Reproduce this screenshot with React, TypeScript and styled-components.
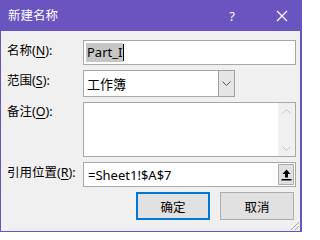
import styled, { createGlobalStyle } from 'styled-components';

const Purple = '#6954c0';
const FieldBorder = '#a8a8a8';
const FontStack = '"Noto Sans", "Noto Sans CJK SC", sans-serif';

const GlobalStyle = createGlobalStyle`
	html, body {
		margin: 0;
		padding: 0;
		background: #ffffff;
	}
	* {
		box-sizing: border-box;
	}
`;

function CloseIcon() {
	return (
		<svg width='12' height='12' viewBox='0 0 12 12'>
			<path d='M1 1 L11 11 M11 1 L1 11' stroke='#ffffff' strokeWidth='1.2' fill='none' />
		</svg>
	);
}

function ChevronDown({ color = '#555' }: { color?: string }) {
	return (
		<svg width='9' height='5' viewBox='0 0 9 5'>
			<path d='M0.5 0.5 L4.5 4.5 L8.5 0.5' stroke={color} strokeWidth='1' fill='none' />
		</svg>
	);
}

function ChevronUp({ color = '#555' }: { color?: string }) {
	return (
		<svg width='9' height='5' viewBox='0 0 9 5'>
			<path d='M0.5 4.5 L4.5 0.5 L8.5 4.5' stroke={color} strokeWidth='1' fill='none' />
		</svg>
	);
}

function CollapseIcon() {
	return (
		<svg width='11' height='12' viewBox='0 0 11 12'>
			<path d='M5.5 0.5 L9.5 5 L7 5 L7 8.5 L4 8.5 L4 5 L1.5 5 Z' fill='#000' />
			<rect x='0.5' y='10' width='10' height='1.5' fill='#000' />
		</svg>
	);
}

export default function App() {
	return (
		<>
			<GlobalStyle />
			<Window>
				<TitleBar>
					<Title>新建名称</Title>
					<TitleButtons>
						<HelpMark>?</HelpMark>
						<CloseBox>
							<CloseIcon />
						</CloseBox>
					</TitleButtons>
				</TitleBar>
				<Body>
					<Label>
						名称(<u>N</u>):
					</Label>
					<TextBox>
						<Selected>Part_I</Selected>
						<Caret />
					</TextBox>

					<Label>
						范围(<u>S</u>):
					</Label>
					<Combo>
						<ComboText>工作簿</ComboText>
						<ComboButton>
							<ChevronDown />
						</ComboButton>
					</Combo>

					<Label $offset={1}>
						备注(<u>O</u>):
					</Label>
					<MemoBox>
						<MemoText />
						<ScrollTrack>
							<ChevronUp color='#c4c4c4' />
							<ChevronDown color='#c4c4c4' />
						</ScrollTrack>
					</MemoBox>

					<Label>
						引用位置(<u>R</u>):
					</Label>
					<RefBox>
						<RefText>=Sheet1!$A$7</RefText>
						<CollapseButton>
							<CollapseIcon />
						</CollapseButton>
					</RefBox>

					<ButtonRow>
						<DialogButton $primary>确定</DialogButton>
						<DialogButton>取消</DialogButton>
					</ButtonRow>
				</Body>
				<Grip>
					<svg width='11' height='11' viewBox='0 0 11 11'>
						<path d='M10 2 L2 10 M10 6 L6 10' stroke='#a8a8a8' strokeWidth='1' fill='none' />
					</svg>
				</Grip>
			</Window>
		</>
	);
}

const Window = styled.div`
	position: relative;
	display: flex;
	flex-direction: column;
	width: 302px;
	height: 232px;
	background: #f0f0f0;
	border-left: 1px solid ${Purple};
	border-right: 2px solid ${Purple};
	border-bottom: 1px solid ${Purple};
	font-family: ${FontStack};
	color: #000;
`;

const TitleBar = styled.div`
	display: flex;
	align-items: center;
	justify-content: space-between;
	height: 31px;
	padding-left: 7px;
	background: ${Purple};
	color: #fff;
`;

const Title = styled.span`
	font-size: 12.5px;
	line-height: 16px;
`;

const TitleButtons = styled.div`
	display: flex;
	align-items: center;
	height: 100%;
`;

const HelpMark = styled.span`
	width: 14px;
	margin-right: 30px;
	font-size: 13px;
	text-align: center;
`;

const CloseBox = styled.span`
	display: flex;
	align-items: center;
	justify-content: center;
	width: 26px;
	margin-right: 5px;
`;

const Body = styled.div`
	display: grid;
	grid-template-columns: 76px 1fr;
	grid-template-rows: 25px 27px 55px 25px 28px;
	row-gap: 5px;
	padding: 9px 4px 0 6px;
`;

const Label = styled.div<{ $offset?: number }>`
	padding-top: ${(p) => (p.$offset ?? 2)}px;
	font-size: 12.5px;
	line-height: 17px;
	white-space: nowrap;

	u {
		text-underline-offset: 2px;
	}
`;

const Field = styled.div`
	display: flex;
	align-items: center;
	background: #fff;
	border: 1px solid ${FieldBorder};
`;

const TextBox = styled(Field)`
	padding-left: 2px;
	font-size: 13px;
`;

const Selected = styled.span`
	background: #c6c6c6;
	line-height: 19px;
	padding: 0 1px;
`;

const Caret = styled.span`
	width: 1px;
	height: 17px;
	background: #000;
`;

const Combo = styled(Field)`
	width: 152px;
	justify-content: space-between;
`;

const ComboText = styled.span`
	padding-left: 3px;
	font-size: 13px;
`;

const ComboButton = styled.span`
	display: flex;
	align-items: center;
	justify-content: center;
	align-self: stretch;
	width: 17px;
	margin: -1px -1px -1px 0;
	background: #e5e5e5;
	border: 1px solid #a0a0a0;
`;

const MemoBox = styled(Field)`
	align-items: stretch;
`;

const MemoText = styled.div`
	flex: 1;
`;

const ScrollTrack = styled.div`
	display: flex;
	flex-direction: column;
	align-items: center;
	justify-content: space-between;
	width: 17px;
	padding: 6px 0 5px;
	background: #f0f0f0;
`;

const RefBox = styled(Field)`
	justify-content: space-between;
`;

const RefText = styled.span`
	padding-left: 4px;
	font-size: 13px;
`;

const CollapseButton = styled.span`
	display: flex;
	align-items: center;
	justify-content: center;
	width: 16px;
	height: 21px;
	margin-right: 1px;
	background: #e1e1e1;
	border: 1px solid #adadad;
`;

const ButtonRow = styled.div`
	grid-column: 1 / -1;
	display: flex;
	justify-content: flex-end;
	gap: 10px;
	padding-right: 2px;
`;

const DialogButton = styled.button<{ $primary?: boolean }>`
	width: 74px;
	height: 28px;
	padding: 0;
	font-family: ${FontStack};
	font-size: 12.5px;
	color: #000;
	background: #e1e1e1;
	border: ${(p) => (p.$primary ? '2px solid #0078d7' : '1px solid #adadad')};
`;

const Grip = styled.div`
	position: absolute;
	right: 0;
	bottom: 0;
	display: flex;
`;
